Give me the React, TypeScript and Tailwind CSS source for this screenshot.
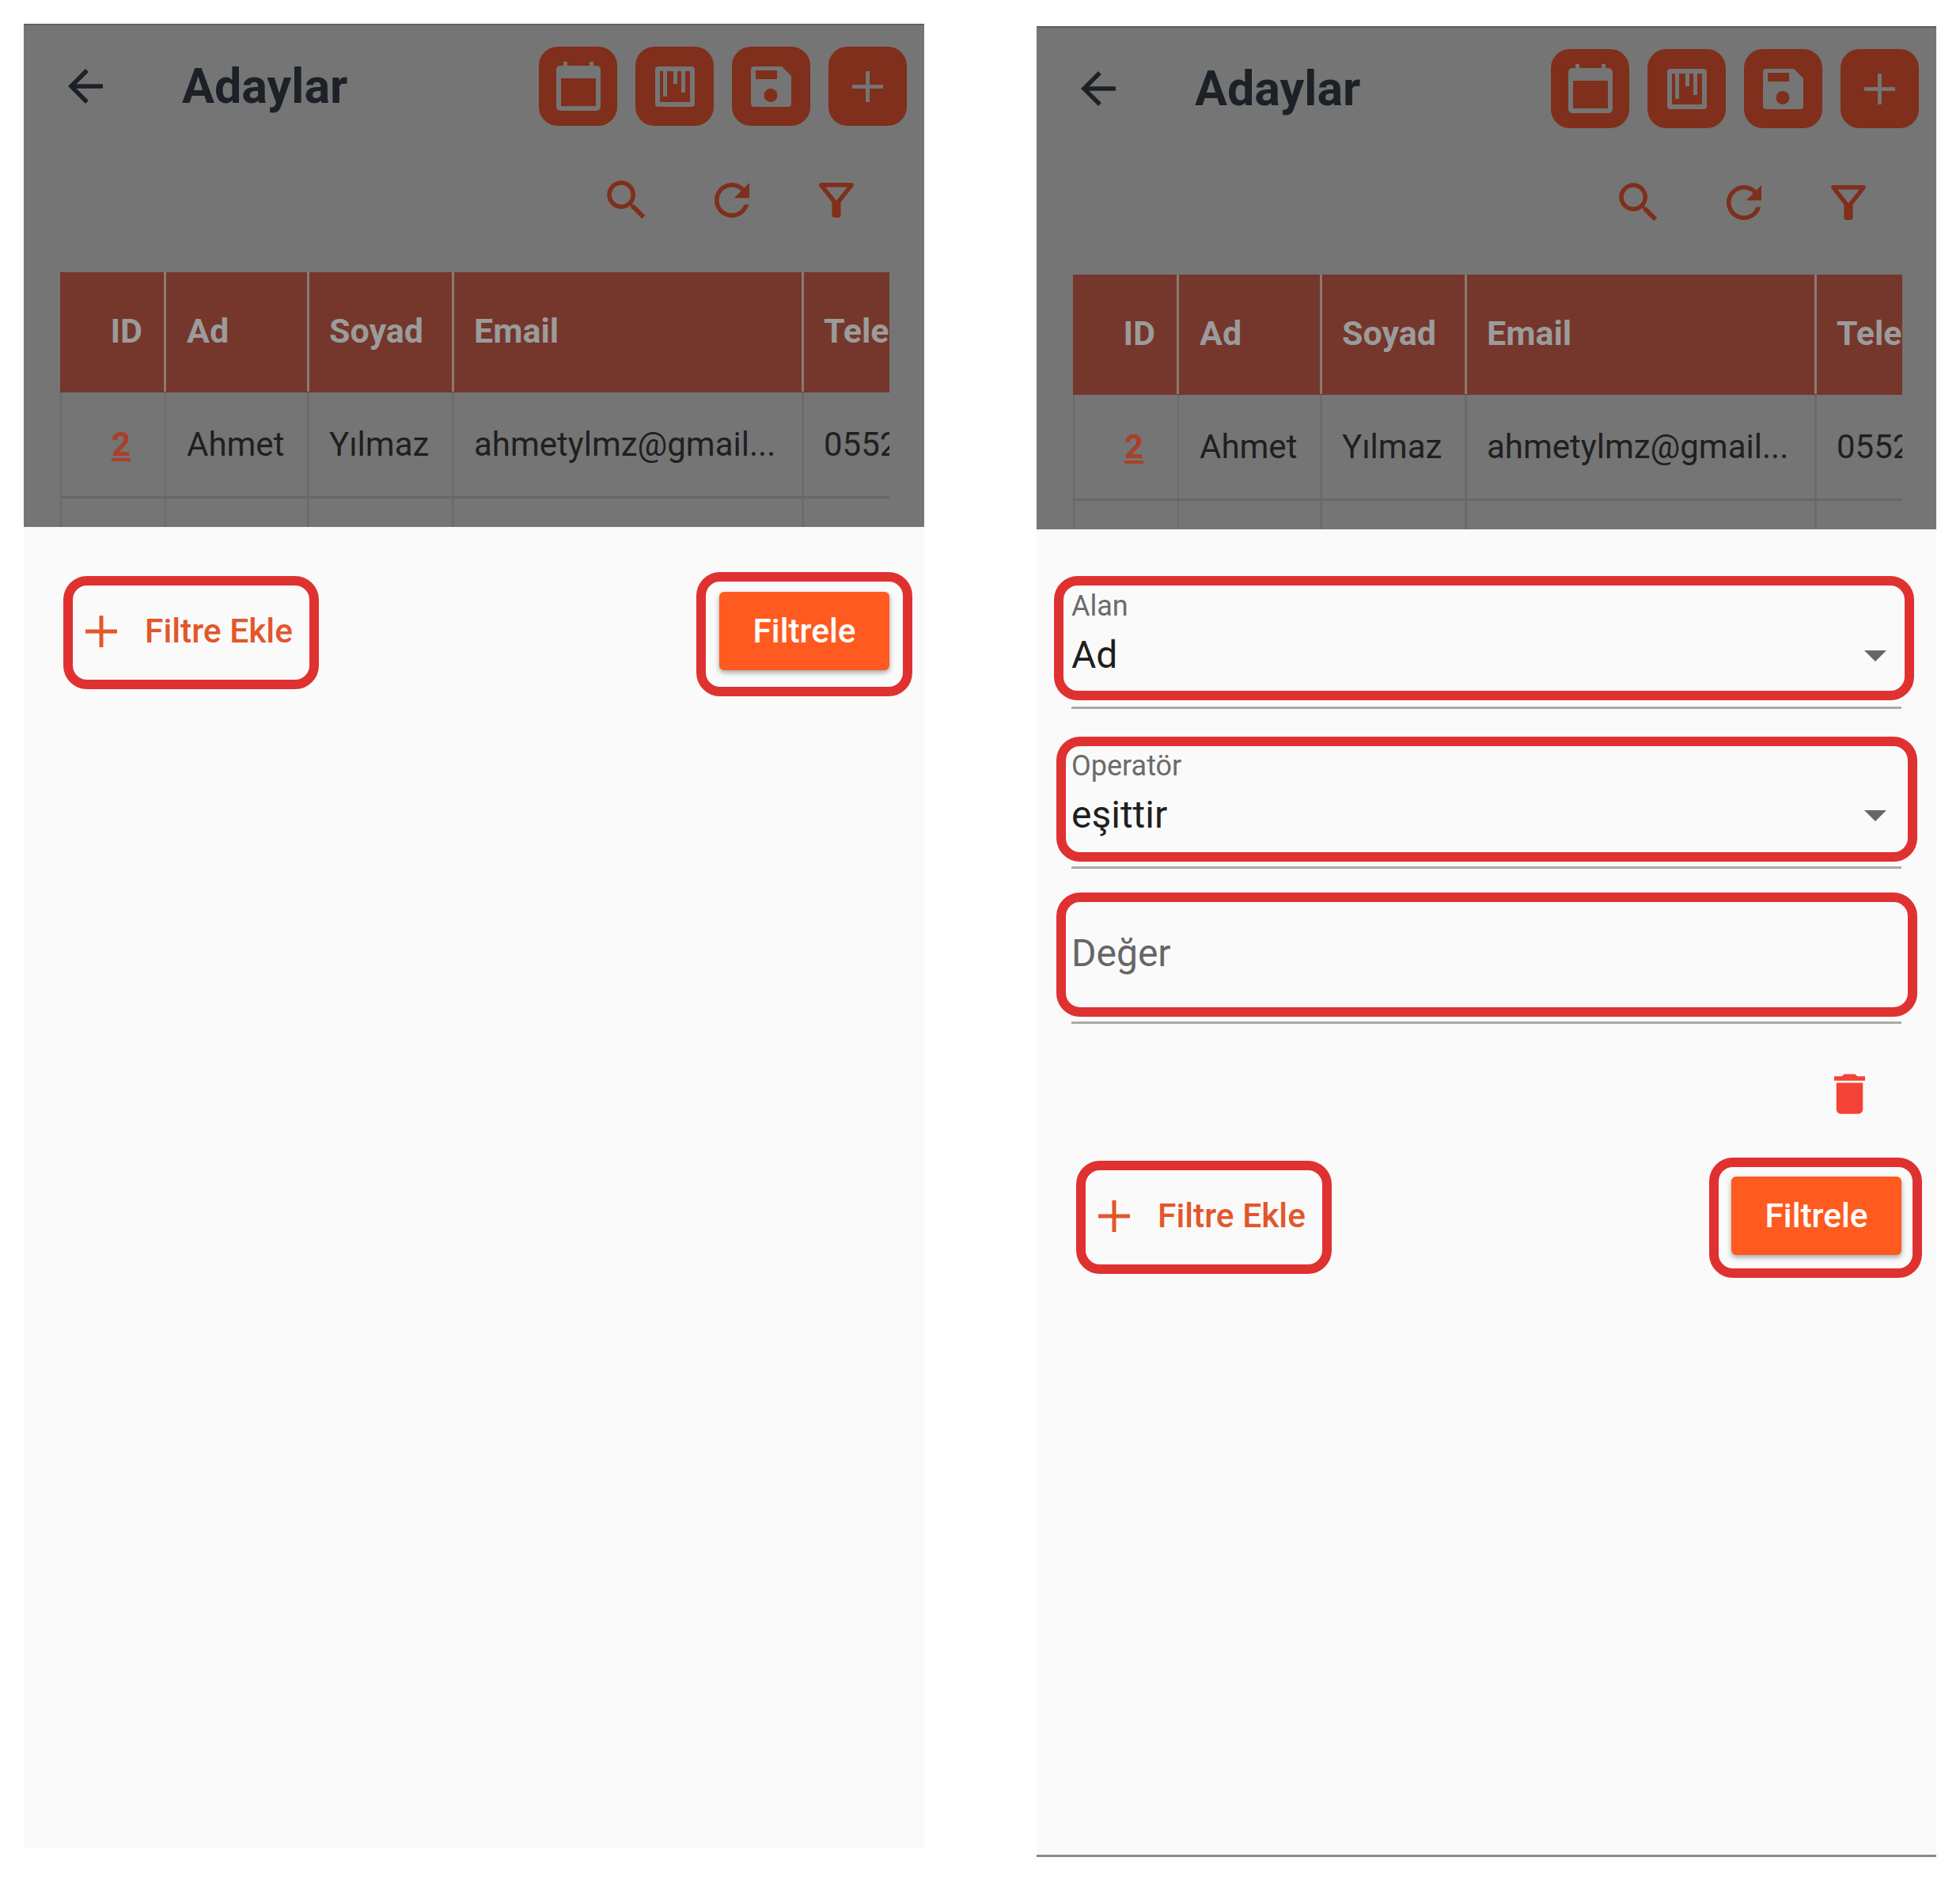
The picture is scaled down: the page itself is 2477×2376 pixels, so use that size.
import type { ReactNode } from 'react'

function Svg({ d, size = 66, className }: { d: string; size?: number; className: string }) {
  return (
    <svg viewBox="0 0 24 24" width={size} height={size} className={className} fill="currentColor">
      <path d={d} />
    </svg>
  )
}

const backPath = 'M20 11H7.83l5.59-5.59L12 4l-8 8 8 8 1.41-1.41L7.83 13H20v-2z'
const searchPath =
  'M15.5 14h-.79l-.28-.27C15.41 12.59 16 11.11 16 9.5 16 5.91 13.09 3 9.5 3S3 5.91 3 9.5 5.91 16 9.5 16c1.61 0 3.09-.59 4.23-1.57l.27.28v.79l5 4.99L20.49 19l-4.99-5zm-6 0C7.01 14 5 11.99 5 9.5S7.01 5 9.5 5 14 7.01 14 9.5 11.99 14 9.5 14z'
const refreshPath =
  'M17.65 6.35C16.2 4.9 14.21 4 12 4c-4.42 0-7.99 3.58-7.99 8s3.57 8 7.99 8c3.73 0 6.84-2.55 7.73-6h-2.08c-.82 2.33-3.04 4-5.65 4-3.31 0-6-2.69-6-6s2.69-6 6-6c1.66 0 3.14.69 4.22 1.78L13 11h7V4l-2.35 2.35z'
const filterPath =
  'M7 6h10l-5.01 6.3L7 6zm-2.75-.39C6.27 8.2 10 13 10 13v6c0 .55.45 1 1 1h2c.55 0 1-.45 1-1v-6s3.72-4.8 5.74-7.39c.51-.66.04-1.61-.79-1.61H5.04c-.83 0-1.3.95-.79 1.61z'
const trashPath = 'M6 19c0 1.1.9 2 2 2h8c1.1 0 2-.9 2-2V7H6v12zM19 4h-3.5l-1-1h-5l-1 1H5v2h14V4z'

function CalendarIcon() {
  return (
    <svg width="56" height="62" viewBox="0 0 56 62" className="text-[#757575]" fill="currentColor">
      <rect x="9" y="0" width="5" height="8" />
      <rect x="42" y="0" width="5" height="8" />
      <path
        fillRule="evenodd"
        d="M5 5h46a5 5 0 0 1 5 5v47a5 5 0 0 1-5 5H5a5 5 0 0 1-5-5V10a5 5 0 0 1 5-5zM6 21v35h44V21z"
      />
    </svg>
  )
}

function BoardIcon() {
  return (
    <svg width="50" height="51" viewBox="0 0 50 51" className="text-[#757575]" fill="currentColor">
      <path
        fillRule="evenodd"
        d="M4 0h42a4 4 0 0 1 4 4v43a4 4 0 0 1-4 4H4a4 4 0 0 1-4-4V4a4 4 0 0 1 4-4zM6 6v39h38V6z"
      />
      <rect x="10" y="6" width="5" height="32" />
      <rect x="23" y="6" width="5" height="16" />
      <rect x="33" y="6" width="5" height="27" />
    </svg>
  )
}

function SaveIcon() {
  return (
    <svg width="51" height="51" viewBox="0 0 51 51" className="text-[#757575]" fill="currentColor">
      <path
        fillRule="evenodd"
        d="M4 0h35l12 12v35a4 4 0 0 1-4 4H4a4 4 0 0 1-4-4V4a4 4 0 0 1 4-4zM6 5v11h27V5zM25 28a8.500 8.500 0 1 0 0 17a8.500 8.500 0 0 0 0-17z"
      />
    </svg>
  )
}

function PlusIcon({ size, className }: { size: number; className: string }) {
  return (
    <svg width={size} height={size} viewBox="0 0 40 40" className={className} fill="currentColor">
      <rect x="17.500" y="0" width="5" height="40" />
      <rect x="0" y="17.500" width="40" height="5" />
    </svg>
  )
}

function ToolButton({ children }: { children: ReactNode }) {
  return (
    <div className="flex h-[100px] w-[99px] items-center justify-center rounded-[24px] bg-[#7f2f1b]">
      {children}
    </div>
  )
}

function Marker({ className }: { className: string }) {
  return <div className={`pointer-events-none absolute rounded-[30px] border-[12px] border-[#e03131] ${className}`} />
}

function Caret() {
  return (
    <svg width="28" height="14" viewBox="0 0 28 14" className="mt-[2px] text-[#666666]" fill="currentColor">
      <path d="M0 0h28L14 14z" />
    </svg>
  )
}

function Overlay() {
  return (
    <div className="h-[636px] overflow-hidden border-t-[2px] border-[#5f5f5f] bg-[#757575] pt-[27px]">
      <div className="flex items-center justify-between pr-[22px] pl-[45px]">
        <div className="flex items-center gap-[89px]">
          <Svg d={backPath} className="text-[#1c2127]" />
          <div className="text-[61px] leading-none font-bold text-[#1c2127]">Adaylar</div>
        </div>
        <div className="flex gap-[23px]">
          <ToolButton>
            <CalendarIcon />
          </ToolButton>
          <ToolButton>
            <BoardIcon />
          </ToolButton>
          <ToolButton>
            <SaveIcon />
          </ToolButton>
          <ToolButton>
            <PlusIcon size={39} className="text-[#757575]" />
          </ToolButton>
        </div>
      </div>

      <div className="mt-[61px] flex justify-end gap-[66px] pr-[78px]">
        <Svg d={searchPath} className="mr-[1px] text-[#7f2f1b]" />
        <Svg d={refreshPath} className="text-[#7f2f1b]" />
        <Svg d={filterPath} className="text-[#7f2f1b]" />
      </div>

      <div className="mt-[58px] ml-[46px] w-[1048px] overflow-hidden">
        <div className="flex h-[152px] w-[1200px] items-center bg-[#75372b] pb-[3px] text-[43px] font-bold text-[#9b9b9b]">
          <div className="flex h-[152px] w-[134px] items-center justify-end border-r-[3px] border-[#8a7a72] pr-[27px]">ID</div>
          <div className="flex h-[152px] w-[181px] items-center border-r-[3px] border-[#8a7a72] pl-[26px]">Ad</div>
          <div className="flex h-[152px] w-[183px] items-center border-r-[3px] border-[#8a7a72] pl-[25px]">Soyad</div>
          <div className="flex h-[152px] w-[442px] items-center border-r-[3px] border-[#8a7a72] pl-[25px]">Email</div>
          <div className="flex h-[152px] flex-1 items-center pl-[25px]">Telefon</div>
        </div>
        <div className="flex h-[134px] w-[1200px] items-center border-b-[3px] border-[#676767] text-[42px] text-[#1f1f1f]">
          <div className="flex h-full w-[134px] items-center justify-end border-x-[2px] border-[#6b6b6b] pr-[43px] font-bold text-[#a8402a] underline">
            2
          </div>
          <div className="flex h-full w-[181px] items-center border-r-[3px] border-[#6b6b6b] pl-[26px]">Ahmet</div>
          <div className="flex h-full w-[183px] items-center border-r-[3px] border-[#6b6b6b] pl-[25px]">Yılmaz</div>
          <div className="flex h-full w-[442px] items-center border-r-[3px] border-[#6b6b6b] pl-[25px]">
            ahmetylmz@gmail...
          </div>
          <div className="flex h-full flex-1 items-center pl-[25px]">0552 123</div>
        </div>
        <div className="flex h-[40px] w-[1200px]">
          <div className="h-full w-[134px] border-x-[2px] border-[#6b6b6b]" />
          <div className="h-full w-[181px] border-r-[3px] border-[#6b6b6b]" />
          <div className="h-full w-[183px] border-r-[3px] border-[#6b6b6b]" />
          <div className="h-full w-[442px] border-r-[3px] border-[#6b6b6b]" />
        </div>
      </div>
    </div>
  )
}

function SelectField({ label, value, className, marker }: { label: string; value: string; className: string; marker: string }) {
  return (
    <div className={`relative h-[166px] border-b-[3px] border-[#aaaaaa] pt-[18px] ${className}`}>
      <div className="text-[36px] leading-[36px] text-[#6b6b6b]">{label}</div>
      <div className="mt-[16px] flex h-[56px] items-center justify-between pr-[19px]">
        <span className="text-[48px] leading-[56px] text-[#1f1f1f]">{value}</span>
        <Caret />
      </div>
      <Marker className={marker} />
    </div>
  )
}

function Actions({ buttonMarker }: { buttonMarker: string }) {
  return (
    <div className="flex h-[99px] items-center justify-between">
      <div className="relative flex h-full items-center gap-[35px] pl-[34px]">
        <PlusIcon size={40} className="text-[#e2572b]" />
        <span className="text-[42.500px] font-medium text-[#e2572b]">Filtre Ekle</span>
        <Marker className="-top-[20px] -right-[33px] -bottom-[24px] left-[6px]" />
      </div>
      <div className="relative">
        <div className="flex h-[99px] w-[215px] items-center justify-center rounded-[6px] bg-[#ff5a1f] text-[42.500px] font-medium text-white shadow-[0_3px_6px_rgba(0,0,0,0.35)]">
          Filtrele
        </div>
        <Marker className={buttonMarker} />
      </div>
    </div>
  )
}

export default function App() {
  return (
    <div className="flex h-[2376px] items-start gap-[142px] bg-white pt-[30px] pl-[30px] font-['Roboto',sans-serif]">
      <div className="h-[2305px] w-[1138px] bg-[#fafafa]">
        <Overlay />
        <div className="px-[44px] pt-[82px]">
          <Actions buttonMarker="-top-[25px] -right-[29px] -bottom-[33px] -left-[29px]" />
        </div>
      </div>

      <div className="mt-[3px] h-[2314px] w-[1137px] border-b-[3px] border-[#8a8a8a] bg-[#fafafa]">
        <Overlay />
        <div className="px-[44px] pt-[61px]">
          <SelectField
            label="Alan"
            value="Ad"
            className=""
            marker="-top-[2px] -right-[16px] bottom-[8px] -left-[22px]"
          />
          <SelectField
            label="Operatör"
            value="eşittir"
            className="mt-[36px]"
            marker="-top-[1px] -right-[20px] bottom-[6px] -left-[19px]"
          />
          <div className="relative mt-[30px] flex h-[166px] items-center border-b-[3px] border-[#aaaaaa] pb-[10px]">
            <span className="text-[48px] text-[#666666]">Değer</span>
            <Marker className="top-0 -right-[20px] bottom-[6px] -left-[19px]" />
          </div>
          <div className="mt-[55px] flex justify-end pr-[32px]">
            <Svg d={trashPath} size={67} className="text-[#f44336]" />
          </div>
          <div className="mt-[71px]">
            <Actions buttonMarker="-top-[24px] -right-[26px] -bottom-[29px] -left-[28px]" />
          </div>
        </div>
      </div>
    </div>
  )
}
